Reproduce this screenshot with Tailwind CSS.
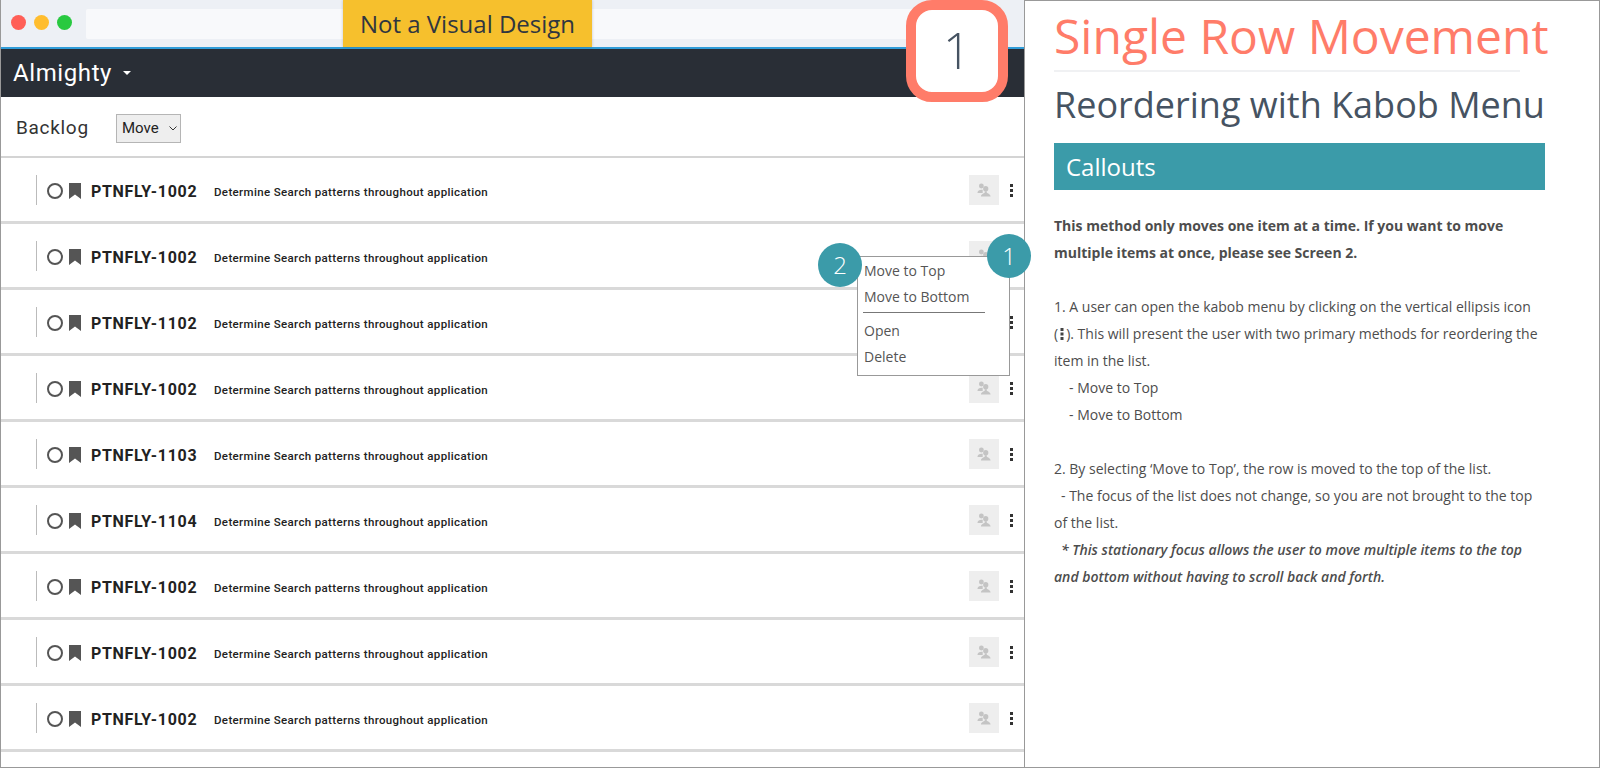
<!DOCTYPE html>
<html lang="en">
<head>
    <meta charset="UTF-8">
    <title>Single Row Movement</title>
    <script src="https://cdn.jsdelivr.net/npm/@tailwindcss/browser@4"></script>
</head>
<body class="bg-white">
    <div class="relative w-[1600px] h-[768px] overflow-hidden flex font-['Open_Sans',sans-serif]">
        <!-- Left: app mockup -->
        <div class="w-[1024px] h-full flex flex-col border-l border-b border-[#999]">
            <!-- Browser chrome -->
            <div class="h-[47px] bg-[#edf0f5] flex items-center pl-[10px] pb-[2px] gap-[8px] shrink-0">
                <span class="w-[15px] h-[15px] rounded-full bg-[#ff5f57]"></span>
                <span class="w-[15px] h-[15px] rounded-full bg-[#ffbd2e]"></span>
                <span class="w-[15px] h-[15px] rounded-full bg-[#28c940]"></span>
                <div class="ml-[6px] w-[830px] h-[30px] mt-[2px] bg-[#f8f9fb] rounded-[2px]"></div>
            </div>
            <div class="h-[2px] bg-[#2f9cd8] shrink-0"></div>
            <!-- Nav -->
            <div class="h-[48px] bg-[#292e36] flex items-center pl-[12px] gap-[11px] shrink-0">
                <span class="text-white text-[24px] font-['Roboto',sans-serif] tracking-[0.6px]">Almighty</span>
                <span class="w-0 h-0 border-x-[4px] border-x-transparent border-t-[4px] border-t-white"></span>
            </div>
            <!-- Toolbar -->
            <div class="h-[59px] flex items-center pl-[15px] pt-[4px] shrink-0">
                <span class="text-[19px] text-[#333] font-['Roboto',sans-serif] tracking-[0.7px] w-[100px]">Backlog</span>
                <div class="w-[65px] h-[29px] bg-[#eeeeee] border border-[#b5b5b5] flex items-center pl-[5px] gap-[10px] text-[15px] text-[#222] font-['Roboto',sans-serif]">
                    Move
                    <svg width="8" height="5" viewBox="0 0 8 5" fill="none" stroke="#333" stroke-width="1"><path d="M0.5 0.5 L4 4 L7.5 0.5"/></svg>
                </div>
            </div>
            <!-- Rows -->
            <div id="rows" class="border-t-[2px] border-[#d4d4d4]"></div>
        </div>

        <!-- Right: annotation panel -->
        <div class="flex-1 h-full border border-[#999] pl-[29px] text-[#4d4d4d]">
            <h1 class="text-[#ff7c69] text-[48px] leading-[60px] mt-[5px] font-normal whitespace-nowrap">Single Row Movement</h1>
            <div class="h-[2px] w-[466px] bg-[#f0f1f3] mt-[4px]"></div>
            <h2 class="text-[#465362] text-[36px] leading-[50px] mt-[8px] font-normal whitespace-nowrap">Reordering with Kabob Menu</h2>
            <div class="w-[491px] h-[47px] bg-[#3b9ba9] text-white text-[24px] font-normal flex items-center pl-[12px] mt-[13px]">Callouts</div>
            <div class="w-[490px] text-[14px] leading-[27px] mt-[22px]">
                <p class="font-bold">This method only moves one item at a time. If you want to move<br>multiple items at once, please see Screen 2.</p>
                <p class="mt-[27px]">1. A user can open the kabob menu by clicking on the vertical ellipsis icon<br>(<svg class="inline-block mx-[2px] mb-[2px]" width="4" height="12" viewBox="0 0 4 12" fill="#444"><rect x="0.5" y="0" width="3" height="3"/><rect x="0.5" y="4.5" width="3" height="3"/><rect x="0.5" y="9" width="3" height="3"/></svg>). This will present the user with two primary methods for reordering the<br>item in the list.</p>
                <p class="pl-[15px]">- Move to Top</p>
                <p class="pl-[15px]">- Move to Bottom</p>
                <p class="mt-[27px]">2. By selecting ‘Move to Top’, the row is moved to the top of the list.</p>
                <p class="pl-[7px]">- The focus of the list does not change, so you are not brought to the top</p>
                <p>of the list.</p>
                <p class="italic font-semibold pl-[7px]">* This stationary focus allows the user to move multiple items to the top</p>
                <p class="italic font-semibold">and bottom without having to scroll back and forth.</p>
            </div>
        </div>

        <!-- Overlays -->
        <div class="absolute left-[343px] top-0 w-[249px] h-[47px] bg-[#f6c02d] shadow-[0_0_3px_rgba(0,0,0,0.2)] flex items-center justify-center text-[#2f3640] text-[24px]">Not a Visual Design</div>
        <div class="absolute left-[906px] top-0 w-[102px] h-[102px] bg-white border-[10px] border-[#ff7c69] rounded-[26px] flex items-center justify-center text-[#465362] text-[49px] font-light">1</div>
        <div class="absolute left-[857px] top-[256px] w-[153px] h-[120px] bg-white border border-[#999] text-[14px] text-[#555] pl-[6px] pt-[1px]">
            <div class="leading-[26px]">Move to Top</div>
            <div class="leading-[26px]">Move to Bottom</div>
            <div class="h-px w-[122px] bg-[#777] mt-[2px] mb-[2px] -ml-px"></div>
            <div class="leading-[26px] mt-[5px]">Open</div>
            <div class="leading-[26px]">Delete</div>
        </div>
        <div class="absolute left-[818px] top-[243px] w-[44px] h-[44px] rounded-full bg-[#3b9ba9] flex items-center justify-center text-white text-[24px] font-light">2</div>
        <div class="absolute left-[987px] top-[234px] w-[44px] h-[44px] rounded-full bg-[#3b9ba9] flex items-center justify-center text-white text-[24px] font-light">1</div>
    </div>

    <script>
        const ids = ['1002', '1002', '1102', '1002', '1103', '1104', '1002', '1002', '1002'];
        document.getElementById('rows').innerHTML = ids.map(id => `
            <div class="h-[66px] border-b-[3px] border-[#d9d9d9] flex items-center pl-[35px] pr-[11px]">
                <span class="w-px h-[30px] bg-[#bbb]"></span>
                <span class="ml-[10px] mt-[2px] w-[16px] h-[16px] rounded-full border-[2.5px] border-[#555]"></span>
                <svg class="ml-[6px] mt-[2px]" width="12" height="16" viewBox="0 0 12 16" fill="#555"><path d="M0 0H12V16L6 11.5L0 16Z"/></svg>
                <span class="ml-[10px] mt-[4px] w-[123px] font-['Roboto',sans-serif] font-bold text-[16px] tracking-[0.67px] text-[#222]">PTNFLY-${id}</span>
                <span class="mt-[6px] font-['Roboto',sans-serif] font-medium text-[11.5px] tracking-[0.36px] text-[#222]">Determine Search patterns throughout application</span>
                <span class="ml-auto w-[30px] h-[30px] bg-[#eeeeee] flex items-center justify-center">
                    <svg width="14" height="14" viewBox="0 0 16 16" fill="#c4c4c4"><circle cx="5" cy="3.5" r="2.8"/><path d="M0.5 11.5C0.5 8.5 3 7.6 5 7.6C5.8 7.6 6.5 7.8 6.5 7.8V11.5Z"/><circle cx="10" cy="6.5" r="3"/><path d="M4.5 15.5C4.5 12.5 8 11.5 8.8 11L8.8 9.5H11.2V11C12 11.5 15.5 12.5 15.5 15.5Z"/></svg>
                </span>
                <span class="ml-[11px] mt-[2px] flex flex-col gap-[2px]">
                    <i class="block w-[3px] h-[3px] bg-[#333]"></i>
                    <i class="block w-[3px] h-[3px] bg-[#333]"></i>
                    <i class="block w-[3px] h-[3px] bg-[#333]"></i>
                </span>
            </div>`).join('');
    </script>
</body>
</html>
